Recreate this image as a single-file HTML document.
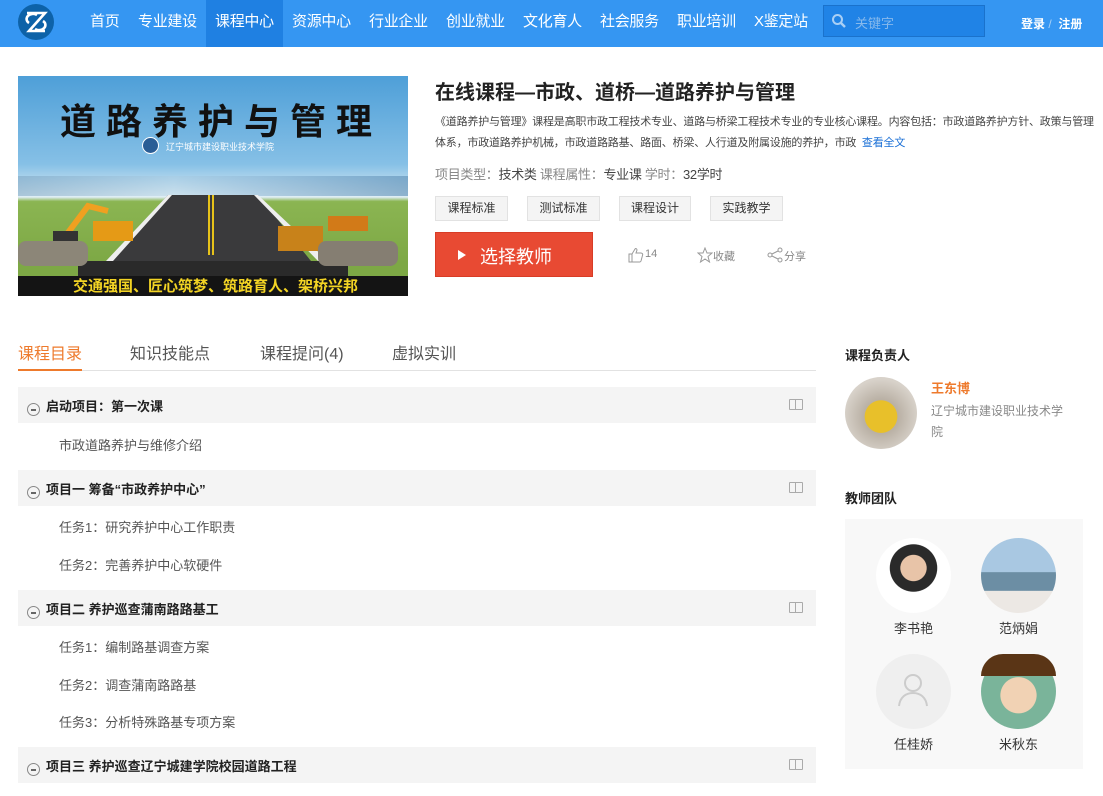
<!DOCTYPE html>
<html><head><meta charset="utf-8">
<style>
*{margin:0;padding:0;box-sizing:border-box}
body{width:1103px;height:796px;overflow:hidden;background:#fff;font-family:"Liberation Sans","Noto Sans CJK SC",sans-serif;color:#333;position:relative}
.a{position:absolute;white-space:nowrap}
.hdr{position:absolute;left:0;top:0;width:1103px;height:47px;background:#3596f2}
.nav{top:0;height:47px;line-height:43px;font-size:15px;color:#fff;letter-spacing:-0.3px}
.act{position:absolute;left:206px;top:0;width:77px;height:47px;background:#1f80e2}
.tag{position:absolute;top:196px;height:25px;line-height:23px;font-size:12px;text-align:center;background:#f4f4f4;border:1px solid #e2e2e2;color:#333}
.bar{position:absolute;left:18px;width:798px;height:36px;background:#f4f4f4}
.bar b{position:absolute;left:28px;top:9px;font-size:13px;color:#222}
.bar i{position:absolute;left:9px;top:16px;width:13px;height:13px;border:1px solid #888;border-radius:50%}
.bar i:after{content:"";position:absolute;left:3px;top:5px;width:5px;height:1.5px;background:#666}
.bar s{position:absolute;right:13px;top:12px;width:14px;height:11px;border:1px solid #aaa;border-radius:1px}
.bar s:after{content:"";position:absolute;left:5px;top:0;width:1px;height:9px;background:#aaa}
.it{position:absolute;left:59px;font-size:13px;color:#555}
.av{position:absolute;width:75px;height:75px;border-radius:50%;overflow:hidden}
.nm{position:absolute;font-size:13px;color:#333;width:75px;text-align:center}
</style></head><body>
<div class="hdr"></div>
<div class="act"></div>
<svg class="a" style="left:17px;top:3px" width="38" height="38" viewBox="0 0 38 38">
<circle cx="19" cy="19" r="18" fill="#0d62a8"/>
<path d="M10 10h18l-16 18h16M12 20a5 4 0 0 1 8-8M26 18a5 4 0 0 1-8 8" fill="none" stroke="#fff" stroke-width="2.6"/>
</svg>
<div class="a nav" style="left:90px">首页</div>
<div class="a nav" style="left:138px">专业建设</div>
<div class="a nav" style="left:215px">课程中心</div>
<div class="a nav" style="left:292px">资源中心</div>
<div class="a nav" style="left:369px">行业企业</div>
<div class="a nav" style="left:446px">创业就业</div>
<div class="a nav" style="left:523px">文化育人</div>
<div class="a nav" style="left:600px">社会服务</div>
<div class="a nav" style="left:677px">职业培训</div>
<div class="a nav" style="left:754px">X鉴定站</div>
<div class="a" style="left:823px;top:5px;width:162px;height:32px;background:#2083e6;border:1px solid #1a72cc"></div>
<svg class="a" style="left:831px;top:13px" width="16" height="16" viewBox="0 0 16 16"><circle cx="6.5" cy="6.5" r="4.5" fill="none" stroke="#a9cff5" stroke-width="2"/><path d="M10 10l4 4" stroke="#a9cff5" stroke-width="2.4"/></svg>
<div class="a" style="left:855px;top:13px;font-size:13px;color:#86b9ec">关键字</div>
<div class="a" style="left:1021px;top:15px;font-size:12px;color:#fff;font-weight:bold">登录 <span style="color:#a8d0f5;font-weight:normal">/</span>&nbsp; 注册</div>

<!-- banner image -->
<div class="a" style="left:18px;top:76px;width:390px;height:220px;overflow:hidden;background:linear-gradient(#4e9fd8 0%,#86c0e6 40%,#cde4f1 52%,#dfeef5 55%,#8bb552 57%,#7da845 85%)">
 <div class="a" style="left:0;top:100px;width:390px;height:20px;background:linear-gradient(90deg,rgba(120,160,190,.5),rgba(170,200,220,.3) 40%,rgba(140,180,210,.5) 60%,rgba(90,140,180,.6))"></div>
 <div class="a" style="left:42px;top:17px;font-size:36px;font-weight:bold;color:#111;letter-spacing:10px">道路养护与管理</div>
 <div class="a" style="left:124px;top:61px;width:17px;height:17px;border-radius:50%;background:#2a5d95;border:1px solid #fff"></div>
 <div class="a" style="left:148px;top:64px;font-size:9px;color:#fff">辽宁城市建设职业技术学院</div>
 <svg class="a" style="left:0;top:115px" width="390" height="105" viewBox="0 0 390 105">
  <polygon points="150,4 240,4 305,85 75,85" fill="#3a3a3c"/>
  <polygon points="150,4 154,4 95,70 88,70" fill="#eee"/>
  <polygon points="236,4 240,4 310,70 300,70" fill="#eee"/>
  <rect x="190" y="4" width="2" height="60" fill="#e6c21a"/><rect x="194" y="4" width="2" height="60" fill="#e6c21a"/>
  <rect x="60" y="70" width="270" height="20" fill="#2a2a2a"/>
  <rect x="0" y="85" width="390" height="20" fill="#141414"/>
  <path d="M40 55l30-40 20 5" stroke="#f0a020" stroke-width="6" fill="none"/>
  <rect x="75" y="30" width="40" height="20" fill="#e59a16"/>
  <rect x="35" y="40" width="25" height="20" fill="#333"/>
  <rect x="260" y="35" width="45" height="25" fill="#c8821a"/>
  <rect x="310" y="25" width="40" height="15" fill="#d27a18"/>
  <rect x="0" y="50" width="70" height="25" fill="#8c8678" rx="8"/>
  <rect x="300" y="50" width="80" height="25" fill="#857e72" rx="8"/>
 </svg>
 <div class="a" style="left:55px;top:199px;font-size:15px;font-weight:bold;color:#f3d424">交通强国、匠心筑梦、筑路育人、架桥兴邦</div>
</div>

<div class="a" style="left:435px;top:76px;font-size:20px;font-weight:bold;color:#222">在线课程—市政、道桥—道路养护与管理</div>
<div class="a" style="left:435px;top:112px;font-size:11px;line-height:21px;color:#444;white-space:normal;width:660px;letter-spacing:-0.2px">《道路养护与管理》课程是高职市政工程技术专业、道路与桥梁工程技术专业的专业核心课程。内容包括：市政道路养护方针、政策与管理体系，市政道路养护机械，市政道路路基、路面、桥梁、人行道及附属设施的养护，市政 &nbsp;<span style="color:#1a6fd6">查看全文</span></div>
<div class="a" style="left:435px;top:164px;font-size:13px;color:#888;letter-spacing:-0.3px">项目类型：<span style="color:#444">技术类</span> 课程属性：<span style="color:#444">专业课</span> 学时：<span style="color:#444">32学时</span></div>
<div class="tag" style="left:435px;width:73px">课程标准</div>
<div class="tag" style="left:527px;width:73px">测试标准</div>
<div class="tag" style="left:619px;width:72px">课程设计</div>
<div class="tag" style="left:710px;width:73px">实践教学</div>
<div class="a" style="left:435px;top:232px;width:158px;height:45px;background:#e84a33;border:1px solid #d83c26"></div>
<svg class="a" style="left:457px;top:249px" width="10" height="12"><polygon points="1,1 9,6 1,11" fill="#fff"/></svg>
<div class="a" style="left:480px;top:243px;font-size:18px;color:#fff">选择教师</div>
<svg class="a" style="left:628px;top:247px" width="16" height="16" viewBox="0 0 16 16"><path d="M1 7h3v8H1zM4 7l3-5c1-1 2 0 2 1l-1 3h5c1 0 2 1 1.6 2l-1.6 6c-.2.6-.6 1-1.2 1H4" fill="none" stroke="#999" stroke-width="1"/></svg>
<div class="a" style="left:645px;top:248px;font-size:11px;color:#888">14</div>
<svg class="a" style="left:697px;top:247px" width="16" height="16" viewBox="0 0 16 16"><polygon points="8,1 10,6 15,6 11,9.5 12.5,15 8,12 3.5,15 5,9.5 1,6 6,6" fill="none" stroke="#999"/></svg>
<div class="a" style="left:713px;top:248px;font-size:11px;color:#888">收藏</div>
<svg class="a" style="left:767px;top:247px" width="16" height="16" viewBox="0 0 16 16"><circle cx="3" cy="8" r="2" fill="none" stroke="#999"/><circle cx="13" cy="3" r="2" fill="none" stroke="#999"/><circle cx="13" cy="13" r="2" fill="none" stroke="#999"/><path d="M5 7l6-3M5 9l6 3" stroke="#999"/></svg>
<div class="a" style="left:784px;top:248px;font-size:11px;color:#888">分享</div>

<!-- tabs -->
<div class="a" style="left:18px;top:340px;font-size:16px;color:#ee7a2c">课程目录</div>
<div class="a" style="left:130px;top:340px;font-size:16px;color:#555">知识技能点</div>
<div class="a" style="left:260px;top:340px;font-size:16px;color:#555">课程提问(4)</div>
<div class="a" style="left:392px;top:340px;font-size:16px;color:#555">虚拟实训</div>
<div class="a" style="left:18px;top:370px;width:798px;height:1px;background:#e2e2e2"></div>
<div class="a" style="left:18px;top:369px;width:64px;height:2px;background:#ee7a2c"></div>

<div class="bar" style="top:387px"><i></i><b>启动项目：第一次课</b><s></s></div>
<div class="it" style="top:435px">市政道路养护与维修介绍</div>
<div class="bar" style="top:470px"><i></i><b>项目一 筹备“市政养护中心”</b><s></s></div>
<div class="it" style="top:517px">任务1：研究养护中心工作职责</div>
<div class="it" style="top:555px">任务2：完善养护中心软硬件</div>
<div class="bar" style="top:590px"><i></i><b>项目二 养护巡查蒲南路路基工</b><s></s></div>
<div class="it" style="top:637px">任务1：编制路基调查方案</div>
<div class="it" style="top:675px">任务2：调查蒲南路路基</div>
<div class="it" style="top:712px">任务3：分析特殊路基专项方案</div>
<div class="bar" style="top:747px"><i></i><b>项目三 养护巡查辽宁城建学院校园道路工程</b><s></s></div>

<!-- right -->
<div class="a" style="left:845px;top:345px;font-size:13px;font-weight:bold;color:#222">课程负责人</div>
<div class="av" style="left:845px;top:377px;width:72px;height:72px;background:radial-gradient(circle at 50% 55%,#e8c02a 0 30%,#b9b0a4 31%,#d8d2ca 70%)"></div>
<div class="a" style="left:931px;top:378px;font-size:13px;font-weight:bold;color:#ee7a2c">王东博</div>
<div class="a" style="left:931px;top:401px;font-size:12px;line-height:21px;color:#888;white-space:normal;width:135px">辽宁城市建设职业技术学院</div>
<div class="a" style="left:845px;top:488px;font-size:13px;font-weight:bold;color:#222">教师团队</div>
<div class="a" style="left:845px;top:519px;width:238px;height:250px;background:#f8f8f8"></div>
<div class="av" style="left:876px;top:538px;background:radial-gradient(circle at 50% 40%,#e8c4a8 0 22%,#2a2a2a 23% 40%,#fff 41%)"></div>
<div class="av" style="left:981px;top:538px;background:linear-gradient(#a9c8e2 0 45%,#6c8ea4 46% 70%,#ece8e4 71%)"></div>
<div class="nm" style="left:876px;top:618px">李书艳</div>
<div class="nm" style="left:981px;top:618px">范炳娟</div>
<div class="av" style="left:876px;top:654px;background:#efefef"></div>
<svg class="a" style="left:896px;top:672px" width="34" height="36" viewBox="0 0 34 36"><circle cx="17" cy="11" r="8" fill="none" stroke="#ccc" stroke-width="2"/><path d="M3 34c1-9 7-13 14-13s13 4 14 13" fill="none" stroke="#ccc" stroke-width="2"/></svg>
<div class="av" style="left:981px;top:654px;background:radial-gradient(circle at 50% 55%,#f1d2b4 0 32%,#7ab49a 33%)"></div>
<div class="a" style="left:981px;top:654px;width:75px;height:22px;border-radius:37px 37px 0 0;background:#5a3516"></div>
<div class="nm" style="left:876px;top:734px">任桂娇</div>
<div class="nm" style="left:981px;top:734px">米秋东</div>
</body></html>
